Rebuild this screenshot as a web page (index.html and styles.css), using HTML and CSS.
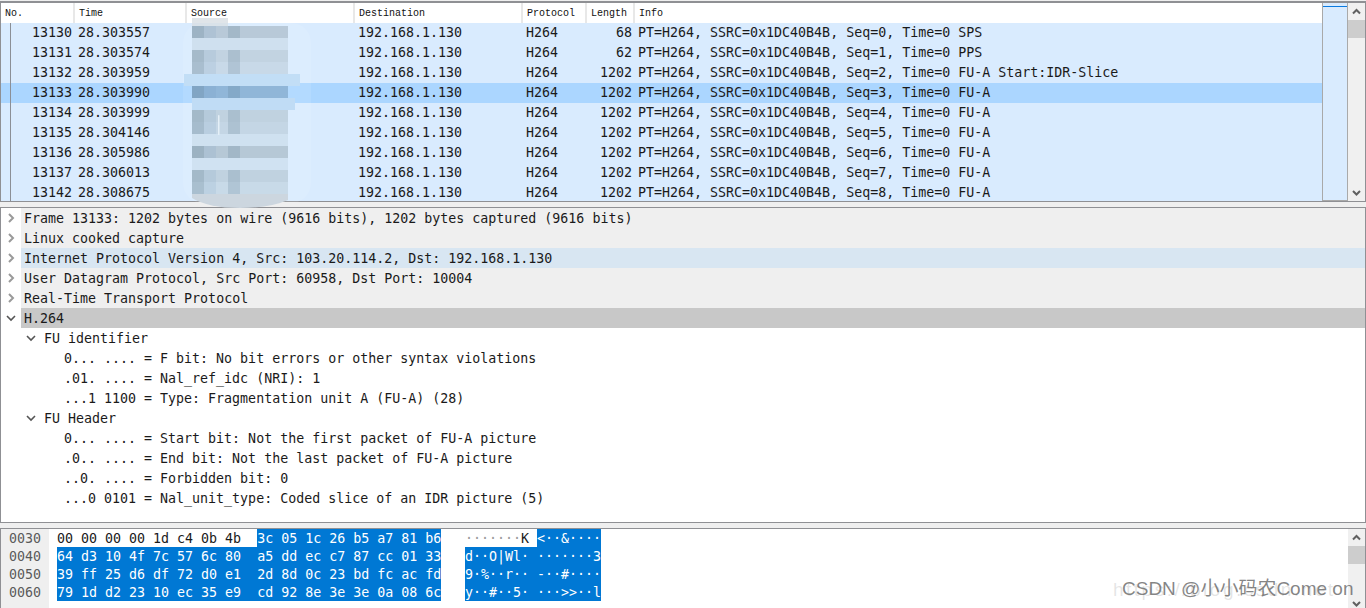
FILE: index.html
```html
<!DOCTYPE html>
<html lang="en">
<head>
    <meta charset="UTF-8">
    <title>Wireshark H.264 capture</title>
    <link rel="stylesheet" href="styles.css">
</head>
<body>

<div class="pane packets">
    <div class="packet-main">
        <div class="row head">
            <span class="no">No.</span><span class="time">Time</span><span class="src">Source</span><span class="dst">Destination</span><span class="proto">Protocol</span><span class="len">Length</span><span class="info">Info</span>
        </div>
        <div class="row"><span class="no">13130</span><span class="time">28.303557</span><span class="src"></span><span class="dst">192.168.1.130</span><span class="proto">H264</span><span class="len">68</span><span class="info">PT=H264, SSRC=0x1DC40B4B, Seq=0, Time=0 SPS</span></div>
        <div class="row"><span class="no">13131</span><span class="time">28.303574</span><span class="src"></span><span class="dst">192.168.1.130</span><span class="proto">H264</span><span class="len">62</span><span class="info">PT=H264, SSRC=0x1DC40B4B, Seq=1, Time=0 PPS</span></div>
        <div class="row"><span class="no">13132</span><span class="time">28.303959</span><span class="src"></span><span class="dst">192.168.1.130</span><span class="proto">H264</span><span class="len">1202</span><span class="info">PT=H264, SSRC=0x1DC40B4B, Seq=2, Time=0 FU-A Start:IDR-Slice</span></div>
        <div class="row current"><span class="no">13133</span><span class="time">28.303990</span><span class="src"></span><span class="dst">192.168.1.130</span><span class="proto">H264</span><span class="len">1202</span><span class="info">PT=H264, SSRC=0x1DC40B4B, Seq=3, Time=0 FU-A</span></div>
        <div class="row"><span class="no">13134</span><span class="time">28.303999</span><span class="src">1</span><span class="dst">192.168.1.130</span><span class="proto">H264</span><span class="len">1202</span><span class="info">PT=H264, SSRC=0x1DC40B4B, Seq=4, Time=0 FU-A</span></div>
        <div class="row"><span class="no">13135</span><span class="time">28.304146</span><span class="src">1</span><span class="dst">192.168.1.130</span><span class="proto">H264</span><span class="len">1202</span><span class="info">PT=H264, SSRC=0x1DC40B4B, Seq=5, Time=0 FU-A</span></div>
        <div class="row"><span class="no">13136</span><span class="time">28.305986</span><span class="src">1</span><span class="dst">192.168.1.130</span><span class="proto">H264</span><span class="len">1202</span><span class="info">PT=H264, SSRC=0x1DC40B4B, Seq=6, Time=0 FU-A</span></div>
        <div class="row"><span class="no">13137</span><span class="time">28.306013</span><span class="src"></span><span class="dst">192.168.1.130</span><span class="proto">H264</span><span class="len">1202</span><span class="info">PT=H264, SSRC=0x1DC40B4B, Seq=7, Time=0 FU-A</span></div>
        <div class="row"><span class="no">13142</span><span class="time">28.308675</span><span class="src"></span><span class="dst">192.168.1.130</span><span class="proto">H264</span><span class="len">1202</span><span class="info">PT=H264, SSRC=0x1DC40B4B, Seq=8, Time=0 FU-A</span></div>

        <div class="bracket"></div>

        <!-- smudge painted over the source addresses, 12px blocks -->
        <svg class="smudge" width="140" height="200" viewBox="0 0 140 200">
            <defs>
                <clipPath id="darkBands">
                    <rect x="0" y="16" width="140" height="12"/>
                    <rect x="0" y="40" width="140" height="24"/>
                    <rect x="0" y="76" width="140" height="12"/>
                    <rect x="0" y="100" width="140" height="24"/>
                    <rect x="0" y="136" width="140" height="12"/>
                    <rect x="0" y="160" width="140" height="24"/>
                </clipPath>
            </defs>
            <rect x="3" y="13" width="128" height="180" rx="20" fill="#fff" opacity="0.1"/>
            <rect x="12" y="8" width="36" height="8" fill="#d8dfe4" opacity="0.8"/>
            <rect x="4" y="64" width="116" height="12" fill="#c2def6"/>
            <rect x="12" y="88" width="103" height="12" fill="#c0dcf5"/>
            <rect x="12" y="16" width="96" height="12" fill="#b8c9d8"/>
            <rect x="12" y="28" width="96" height="12" fill="#cfe0ef"/>
            <rect x="12" y="40" width="96" height="12" fill="#c2d3e1"/>
            <rect x="12" y="52" width="96" height="12" fill="#c8d9e8"/>
            <rect x="12" y="76" width="96" height="12" fill="#90b6d8"/>
            <rect x="12" y="100" width="96" height="12" fill="#c0d2e0"/>
            <rect x="12" y="112" width="96" height="12" fill="#c4d6e5"/>
            <rect x="12" y="124" width="96" height="12" fill="#cfe1f0"/>
            <rect x="12" y="136" width="96" height="12" fill="#b6c8d6"/>
            <rect x="12" y="148" width="96" height="12" fill="#d0e2f2"/>
            <rect x="12" y="160" width="96" height="12" fill="#c0d2e0"/>
            <rect x="12" y="172" width="96" height="12" fill="#c8dae8"/>
            <path d="M12 184H108V190Q90 198 60 198 28 198 12 188Z" fill="#ccd6df"/>
            <g clip-path="url(#darkBands)">
                <rect x="12" y="0" width="12" height="200" fill="#5b7a90" opacity="0.28"/>
                <rect x="24" y="0" width="12" height="200" fill="#6f90c0" opacity="0.12"/>
                <rect x="48" y="0" width="12" height="200" fill="#5b7a90" opacity="0.22"/>
            </g>
            <rect x="38" y="105" width="1.500" height="20" rx="0.700" fill="#eef6fc" opacity="0.8"/>
        </svg>
    </div>
    <div class="packet-map"><div class="map-mark"></div></div>
    <div class="scrollbar">
        <svg class="arrow" width="17" height="17" viewBox="0 0 17 17"><path d="M5 10.500 8.500 7 12 10.500" class="chev"/></svg>
        <div class="thumb"></div>
        <div class="track"></div>
        <svg class="arrow" width="17" height="17" viewBox="0 0 17 17"><path d="M5 7 8.500 10.500 12 7" class="chev"/></svg>
    </div>
</div>

<div class="pane details">
    <div class="tree-row closed"><svg class="tw" width="10" height="10" viewBox="0 0 10 10"><path d="M3 1 7 5 3 9"/></svg><span>Frame 13133: 1202 bytes on wire (9616 bits), 1202 bytes captured (9616 bits)</span></div>
    <div class="tree-row closed"><svg class="tw" width="10" height="10" viewBox="0 0 10 10"><path d="M3 1 7 5 3 9"/></svg><span>Linux cooked capture</span></div>
    <div class="tree-row closed hover"><svg class="tw" width="10" height="10" viewBox="0 0 10 10"><path d="M3 1 7 5 3 9"/></svg><span>Internet Protocol Version 4, Src: 103.20.114.2, Dst: 192.168.1.130</span></div>
    <div class="tree-row closed"><svg class="tw" width="10" height="10" viewBox="0 0 10 10"><path d="M3 1 7 5 3 9"/></svg><span>User Datagram Protocol, Src Port: 60958, Dst Port: 10004</span></div>
    <div class="tree-row closed"><svg class="tw" width="10" height="10" viewBox="0 0 10 10"><path d="M3 1 7 5 3 9"/></svg><span>Real-Time Transport Protocol</span></div>
    <div class="tree-row picked"><svg class="tw" width="10" height="10" viewBox="0 0 10 10"><path d="M1 3 5 7 9 3"/></svg><span>H.264</span></div>
    <div class="tree-row lvl1"><svg class="tw" width="10" height="10" viewBox="0 0 10 10"><path d="M1 3 5 7 9 3"/></svg><span>FU identifier</span></div>
    <div class="tree-row lvl2">0... .... = F bit: No bit errors or other syntax violations</div>
    <div class="tree-row lvl2">.01. .... = Nal_ref_idc (NRI): 1</div>
    <div class="tree-row lvl2">...1 1100 = Type: Fragmentation unit A (FU-A) (28)</div>
    <div class="tree-row lvl1"><svg class="tw" width="10" height="10" viewBox="0 0 10 10"><path d="M1 3 5 7 9 3"/></svg><span>FU Header</span></div>
    <div class="tree-row lvl2">0... .... = Start bit: Not the first packet of FU-A picture</div>
    <div class="tree-row lvl2">.0.. .... = End bit: Not the last packet of FU-A picture</div>
    <div class="tree-row lvl2">..0. .... = Forbidden bit: 0</div>
    <div class="tree-row lvl2">...0 0101 = Nal_unit_type: Coded slice of an IDR picture (5)</div>
</div>

<div class="pane bytes">
    <div class="offsets">
        <div class="hex-line">0030</div>
        <div class="hex-line">0040</div>
        <div class="hex-line">0050</div>
        <div class="hex-line">0060</div>
    </div>
    <div class="hex">
        <div class="hex-line"><span class="plain">00 00 00 00 1d c4 0b 4b  </span><span class="sel">3c 05 1c 26 b5 a7 81 b6</span></div>
        <div class="hex-line"><span class="sel">64 d3 10 4f 7c 57 6c 80  a5 dd ec c7 87 cc 01 33</span></div>
        <div class="hex-line"><span class="sel">39 ff 25 d6 df 72 d0 e1  2d 8d 0c 23 bd fc ac fd</span></div>
        <div class="hex-line"><span class="sel">79 1d d2 23 10 ec 35 e9  cd 92 8e 3e 3e 0a 08 6c</span></div>
    </div>
    <div class="ascii">
        <div class="hex-line"><span class="plain dim">·······<b>K</b> </span><span class="sel">&lt;··&amp;····</span></div>
        <div class="hex-line"><span class="sel">d··O|Wl· ·······3</span></div>
        <div class="hex-line"><span class="sel">9·%··r·· -··#····</span></div>
        <div class="hex-line"><span class="sel">y··#··5· ···&gt;&gt;··l</span></div>
    </div>
    <div class="scrollbar">
        <svg class="arrow" width="17" height="17" viewBox="0 0 17 17"><path d="M5 10.500 8.500 7 12 10.500" class="chev"/></svg>
        <div class="thumb"></div>
        <div class="track"></div>
        <svg class="arrow" width="17" height="17" viewBox="0 0 17 17"><path d="M5 7 8.500 10.500 12 7" class="chev"/></svg>
    </div>
    <div class="watermark-ghost">https://blog.csdn.net</div>
    <div class="watermark">CSDN @小小码农Come on</div>
</div>

</body>
</html>
```

FILE: styles.css
```css
/* Global Styles */
html, body {
    height: 100%;
    margin: 0;
    overflow: hidden;
}

body {
    display: flex;
    flex-direction: column;
    gap: 5px;
    padding-top: 1px;
    box-sizing: border-box;
    background: #efefef;
    color: #1a1a1a;
    font-family: "DejaVu Sans Mono", "Liberation Mono", monospace;
    font-size: 13.3px;
}

.pane {
    flex: none;
    box-sizing: border-box;
    border: 1px solid #8f9094;
    background: #fff;
    display: flex;
    position: relative;
}

/* Packet list */
.packets {
    height: 201px;
    border-top-width: 2px;
    z-index: 1;
}

.packet-main {
    flex: 1;
    min-width: 0;
    position: relative;
    background: #d9ebfe;
}

.row {
    display: flex;
    height: 20px;
    line-height: 20px;
    white-space: pre;
}

.row.current {
    background: #abd6ff;
}

.row > span {
    flex: none;
    box-sizing: border-box;
    padding-left: 3px;
    overflow: hidden;
}

.no { width: 74px; text-align: right; padding-right: 3px; }
.time { width: 112px; }
.src { width: 168px; padding-left: 4px !important; }
.dst { width: 168px; }
.proto { width: 64px; }
.len { width: 48px; text-align: right; padding-right: 3px; }
.info { flex: 1 !important; }

.row.head {
    background: #fff;
    font-family: "Liberation Mono", monospace;
    font-size: 10px;
    line-height: 21px;
    color: #111;
}

.row.head span {
    border-right: 2px solid #e8e8e8;
    text-align: left;
    padding-left: 4px;
}

.row.head .info { border-right: none; }

.bracket {
    position: absolute;
    left: 9px;
    top: 20px;
    bottom: 0;
    width: 1px;
    background: #8b8f96;
}

.smudge {
    position: absolute;
    left: 179px;
    top: 7px;
}

.packet-map {
    flex: none;
    width: 26px;
    box-sizing: border-box;
    background: #d9ebfe;
    border: 1px solid #a9a9a9;
    border-top: none;
}

.map-mark {
    height: 1px;
    margin-top: 3px;
    background: #0a7ae0;
}

/* Scrollbars */
.scrollbar {
    flex: none;
    width: 17px;
    display: flex;
    flex-direction: column;
    background: #f0f0f0;
}

.arrow {
    flex: none;
    display: block;
}

.chev {
    fill: none;
    stroke: #606060;
    stroke-width: 2;
}

.thumb {
    flex: none;
    height: 18px;
    background: #cdcdcd;
}

.track {
    flex: 1;
}

/* Details tree */
.details {
    height: 316px;
    flex-direction: column;
}

.tree-row {
    flex: none;
    height: 20px;
    line-height: 22px;
    white-space: pre;
    padding-left: 3px;
    margin-left: 20px;
    position: relative;
}

.tree-row.closed {
    background: #efefef;
}

.tree-row.hover {
    background: #d8e6f2;
}

.tree-row.picked {
    background: #c8c8c8;
}

.tw {
    position: absolute;
    left: -15px;
    top: 5px;
    fill: none;
    stroke: #9a9a9a;
    stroke-width: 2;
}

.picked .tw, .lvl1 .tw {
    stroke: #555;
    stroke-width: 1.6;
}

.tree-row.lvl1 {
    margin-left: 0;
    padding-left: 43px;
}

.lvl1 .tw {
    left: 25px;
}

.tree-row.lvl2 {
    margin-left: 0;
    padding-left: 63px;
}

/* Bytes pane */
.bytes {
    height: 84px;
    border-bottom: none;
    line-height: 20px;
}

.offsets {
    flex: none;
    width: 48px;
    box-sizing: border-box;
    padding-left: 8px;
    background: #efefef;
    color: #5a5a5a;
}

.hex {
    flex: none;
    margin-left: 8px;
    width: 408px;
}

.ascii {
    flex: 1;
}

.hex-line {
    height: 18px;
    white-space: pre;
}

.sel {
    background: #0078d4;
    color: #fff;
    display: inline-block;
    height: 18px;
    vertical-align: top;
}

.plain {
    display: inline-block;
    height: 18px;
    vertical-align: top;
}

.dim {
    color: #9a9a9a;
}

.dim b {
    color: #1a1a1a;
    font-weight: normal;
}

.watermark,
.watermark-ghost {
    position: absolute;
    font-family: "Liberation Sans", "Noto Sans CJK SC", sans-serif;
    white-space: nowrap;
    pointer-events: none;
}

.watermark {
    left: 1121px;
    top: 49px;
    font-size: 19px;
    line-height: 22px;
    color: rgba(100, 100, 100, 0.78);
}

.watermark-ghost {
    left: 1112px;
    top: 50px;
    font-size: 19px;
    line-height: 22px;
    letter-spacing: 2.500px;
    color: rgba(160, 160, 160, 0.28);
}
```
